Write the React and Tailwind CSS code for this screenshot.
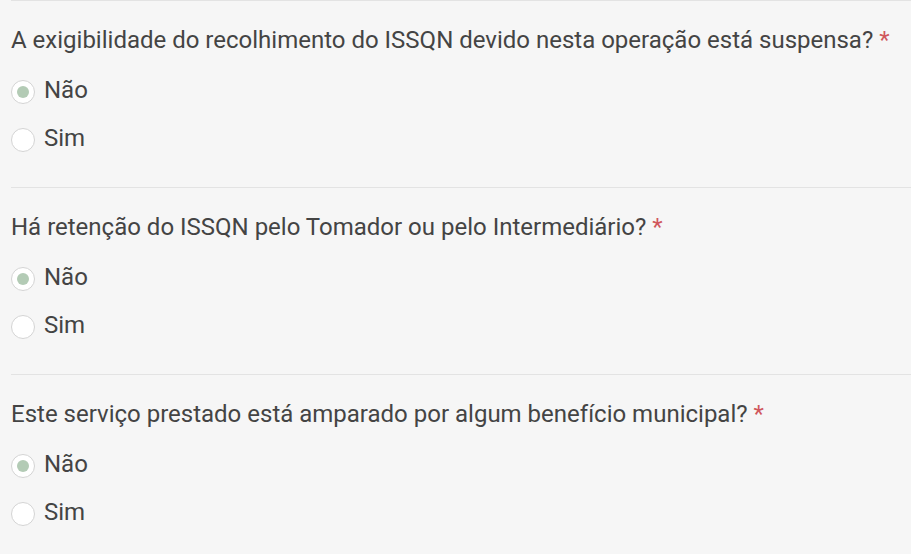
const questions = [
  "A exigibilidade do recolhimento do ISSQN devido nesta operação está suspensa?",
  "Há retenção do ISSQN pelo Tomador ou pelo Intermediário?",
  "Este serviço prestado está amparado por algum benefício municipal?",
];

function Radio({ checked, label }) {
  return (
    <label className="flex h-12 items-center gap-[9px] cursor-pointer">
      <span className="mt-1 flex h-6 w-6 shrink-0 items-center justify-center rounded-full border border-[#d4d4d4] bg-white">
        {checked && <span className="h-3 w-3 rounded-full bg-[#b3cbb5]" />}
      </span>
      <span>{label}</span>
    </label>
  );
}

function Question({ text }) {
  return (
    <div className="border-t border-[#e3e3e3] pt-[23px] pb-[25px]">
      <p className="leading-8 mb-[10px]">
        {text} <span className="text-[#d0575c]">*</span>
      </p>
      <Radio checked label="Não" />
      <Radio label="Sim" />
    </div>
  );
}

export default function App() {
  return (
    <div className="min-h-screen bg-[#f6f6f6] pl-[11px] text-[24px] text-[#444] font-['Roboto',sans-serif]">
      {questions.map((q) => (
        <Question key={q} text={q} />
      ))}
    </div>
  );
}
